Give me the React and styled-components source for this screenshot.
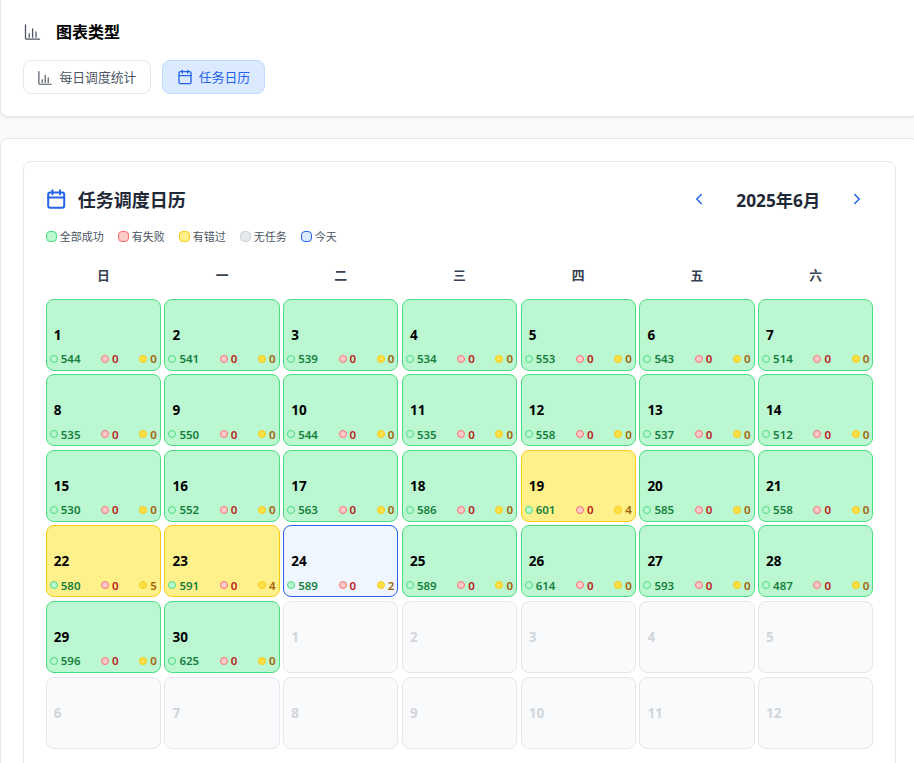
import React from 'react';
import styled, { createGlobalStyle } from 'styled-components';
import { Calendar, ChevronLeft, ChevronRight } from 'lucide-react';

const GlobalStyle = createGlobalStyle`
    html, body {
        margin: 0;
        height: 763px;
        overflow: hidden;
        background: #f9fafb;
    }
    body {
        font-family: "Noto Sans", "Noto Sans CJK SC", sans-serif;
    }
    * { box-sizing: border-box; }
`;

const Page = styled.div`
    width: 919px;
    height: 763px;
    overflow: hidden;
`;

const TypePanel = styled.section`
    height: 117px;
    margin-bottom: 21px;
    padding: 18px 22px 0;
    background: #fff;
    border: 1px solid #e5e7eb;
    border-top: 0;
    border-radius: 0 0 8px 8px;
    box-shadow: 0 1px 3px rgba(0, 0, 0, 0.08);
`;

const PanelTitle = styled.div`
    display: flex;
    align-items: center;
    gap: 15px;
    height: 26px;

    h2 {
        margin: 0;
        font-size: 16px;
        font-weight: 700;
        color: #000;
    }
`;

const TabRow = styled.div`
    display: flex;
    gap: 11px;
    margin-top: 16px;
`;

const Tab = styled.button`
    display: flex;
    align-items: center;
    gap: 5.5px;
    height: 34px;
    padding: 0 14px 2px;
    font: inherit;
    font-size: 12.8px;
    color: ${p => (p.$active ? '#2563eb' : '#4b5563')};
    background: ${p => (p.$active ? '#dbeafe' : '#fff')};
    border: 1px solid ${p => (p.$active ? '#bfdbfe' : '#e5e7eb')};
    border-radius: 8px;

    svg { margin-top: 2px; }
`;

const CalendarPanel = styled.section`
    height: 640px;
    padding: 22px 22px 0;
    background: #fff;
    border: 1px solid #e5e7eb;
    border-radius: 8px;
`;

const CalendarCard = styled.div`
    height: 640px;
    padding: 21px 21.75px 0;
    background: #fff;
    border: 1px solid #e5e7eb;
    border-radius: 8px;
`;

const CalendarHead = styled.div`
    display: flex;
    align-items: center;
    justify-content: space-between;
    height: 32px;
    margin-bottom: 13px;
`;

const CalendarTitle = styled.div`
    display: flex;
    align-items: center;
    gap: 12px;
    color: #2563eb;

    h3 {
        margin: 0;
        font-size: 18px;
        font-weight: 700;
        color: #1f2937;
    }
`;

const MonthNav = styled.div`
    display: flex;
    align-items: center;
    padding-right: 7px;
    color: #2563eb;

    strong {
        width: 140px;
        text-align: center;
        font-size: 17.3px;
        font-weight: 700;
        color: #1f2937;
    }
`;

const Legend = styled.div`
    display: flex;
    gap: 14px;
    height: 16px;
    margin-bottom: 15px;
`;

const LegendItem = styled.div`
    display: flex;
    align-items: center;
    gap: 3px;
    font-size: 11px;
    color: #4b5563;
`;

const LegendSwatch = styled.span`
    width: 11px;
    height: 11px;
    border-radius: 4px;
    background: ${p => p.$bg};
    border: 1px solid ${p => p.$border};
`;

const WeekRow = styled.div`
    display: grid;
    grid-template-columns: repeat(7, 1fr);
    gap: 3.6px;
    height: 30px;
    margin-bottom: 9.6px;
`;

const WeekDay = styled.div`
    display: flex;
    align-items: center;
    justify-content: center;
    font-size: 12.8px;
    font-weight: 700;
    color: #374151;
`;

const DayGrid = styled.div`
    display: grid;
    grid-template-columns: repeat(7, 1fr);
    grid-auto-rows: 72px;
    gap: 3.6px;
`;

const tones = {
    ok: { bg: '#bbf7d0', border: '#4ade80', text: '#000' },
    warn: { bg: '#fef08a', border: '#facc15', text: '#000' },
    today: { bg: '#eff6ff', border: '#2563eb', text: '#000' },
    empty: { bg: '#f9fafb', border: '#e5e7eb', text: '#d1d5db' },
};

const DayCell = styled.div`
    padding: 25px 3px 0;
    background: ${p => tones[p.$tone].bg};
    border: 1px solid ${p => tones[p.$tone].border};
    border-radius: 8px;
`;

const DayNumber = styled.div`
    padding-left: 4px;
    height: 20px;
    line-height: 20px;
    font-size: 13.5px;
    font-weight: 700;
    color: ${p => tones[p.$tone].text};
`;

const Counts = styled.div`
    display: flex;
    justify-content: space-between;
    margin-top: 6px;
    height: 16px;
`;

const Count = styled.div`
    display: flex;
    align-items: center;
    gap: 3px;
    font-size: 11.5px;
    font-weight: 600;
    color: ${p => p.$color};
`;

const Dot = styled.span`
    width: 8px;
    height: 8px;
    border-radius: 50%;
    background: ${p => p.$bg};
    border: 1px solid ${p => p.$border};
`;

const LEGEND = [
    ['全部成功', '#bbf7d0', '#4ade80'],
    ['有失败', '#fecaca', '#f87171'],
    ['有错过', '#fef08a', '#facc15'],
    ['无任务', '#e5e7eb', '#d1d5db'],
    ['今天', '#dbeafe', '#2563eb'],
];

const WEEK = ['日', '一', '二', '三', '四', '五', '六'];

// [success, missed]
const JUNE = [
    [544, 0], [541, 0], [539, 0], [534, 0], [553, 0], [543, 0], [514, 0],
    [535, 0], [550, 0], [544, 0], [535, 0], [558, 0], [537, 0], [512, 0],
    [530, 0], [552, 0], [563, 0], [586, 0], [601, 4], [585, 0], [558, 0],
    [580, 5], [591, 4], [589, 2], [589, 0], [614, 0], [593, 0], [487, 0],
    [596, 0], [625, 0],
];

const TODAY = 24;

const ChartIcon = ({ size, viewBox = '0 0 18 18' }) => (
    <svg width={size} height={size} viewBox={viewBox} fill="none" stroke="#4b5563" strokeWidth="1.3" strokeLinecap="round">
        <path d="M2.5 3v13a1.2 1.2 0 0 0 1.2 1.2h12.8" />
        <path d="M6.2 12v3.2M9.6 7v8.2M13 10v5.2" />
    </svg>
);

const TitleCalendarIcon = () => (
    <svg width="20" height="20" viewBox="0 0 20 20" fill="none" stroke="currentColor" strokeWidth="2" strokeLinecap="round">
        <rect x="2.2" y="3.6" width="16" height="15.2" rx="2" />
        <path d="M2.2 8.4h16M6.4 1.2v4M14 1.2v4" />
    </svg>
);

const Day = ({ day, success, missed }) => {
    const tone = day === TODAY ? 'today' : missed > 0 ? 'warn' : 'ok';
    return (
        <DayCell $tone={tone}>
            <DayNumber $tone={tone}>{day}</DayNumber>
            <Counts>
                <Count $color="#15803d"><Dot $bg="#bbf7d0" $border="#4ade80" />{success}</Count>
                <Count $color="#b91c1c"><Dot $bg="#fecaca" $border="#f87171" />0</Count>
                <Count $color="#a16207"><Dot $bg="#fde047" $border="#facc15" />{missed}</Count>
            </Counts>
        </DayCell>
    );
};

const App = () => (
    <Page>
        <GlobalStyle />
        <TypePanel>
            <PanelTitle>
                <ChartIcon size={18} />
                <h2>图表类型</h2>
            </PanelTitle>
            <TabRow>
                <Tab><ChartIcon size={16} viewBox="1.5 0 18 18" />每日调度统计</Tab>
                <Tab $active><Calendar size={16} />任务日历</Tab>
            </TabRow>
        </TypePanel>
        <CalendarPanel>
            <CalendarCard>
                <CalendarHead>
                    <CalendarTitle>
                        <TitleCalendarIcon />
                        <h3>任务调度日历</h3>
                    </CalendarTitle>
                    <MonthNav>
                        <ChevronLeft size={18} />
                        <strong>2025年6月</strong>
                        <ChevronRight size={18} />
                    </MonthNav>
                </CalendarHead>
                <Legend>
                    {LEGEND.map(([label, bg, border]) => (
                        <LegendItem key={label}>
                            <LegendSwatch $bg={bg} $border={border} />
                            {label}
                        </LegendItem>
                    ))}
                </Legend>
                <WeekRow>
                    {WEEK.map(w => <WeekDay key={w}>{w}</WeekDay>)}
                </WeekRow>
                <DayGrid>
                    {JUNE.map(([success, missed], i) => (
                        <Day key={i} day={i + 1} success={success} missed={missed} />
                    ))}
                    {Array.from({ length: 12 }, (_, i) => (
                        <DayCell key={i} $tone="empty">
                            <DayNumber $tone="empty">{i + 1}</DayNumber>
                        </DayCell>
                    ))}
                </DayGrid>
            </CalendarCard>
        </CalendarPanel>
    </Page>
);

export default App;
